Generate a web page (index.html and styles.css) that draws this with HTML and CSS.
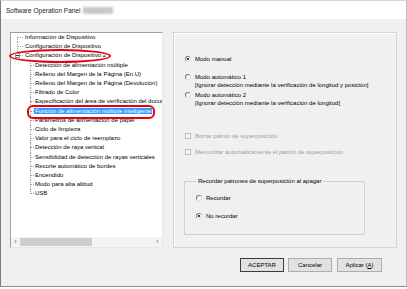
FILE: index.html
```html
<!DOCTYPE html>
<html lang="es">
<head>
    <meta charset="UTF-8">
    <title>Software Operation Panel</title>
    <link rel="stylesheet" href="styles.css">
</head>
<body>
<div class="window">
    <div class="titlebar">
        <span>Software Operation Panel</span>
        <span class="blur"></span>
    </div>

    <div class="main">
        <div class="panels">
            <div class="tree-wrap">
                <div class="tree">
                    <ul class="roots">
                        <li class="root first"><span class="label">Información de Dispositivo</span></li>
                        <li class="root"><span class="label">Configuración de Dispositivo</span></li>
                        <li class="root last">
                            <span class="toggle"></span>
                            <span class="label">Configuración de Dispositivo 2</span>
                            <ul class="kids">
                                <li class="kid"><span class="label">Detección de alimentación múltiple</span></li>
                                <li class="kid"><span class="label">Relleno del Margen de la Página (En U)</span></li>
                                <li class="kid"><span class="label">Relleno del Margen de la Página (Devolución)</span></li>
                                <li class="kid"><span class="label">Filtrado de Color</span></li>
                                <li class="kid"><span class="label">Especificación del área de verificación del documento</span></li>
                                <li class="kid"><span class="label selected">Función de alimentación múltiple inteligente</span></li>
                                <li class="kid"><span class="label">Parámetros de alimentación de papel</span></li>
                                <li class="kid"><span class="label">Ciclo de limpieza</span></li>
                                <li class="kid"><span class="label">Valor para el ciclo de reemplazo</span></li>
                                <li class="kid"><span class="label">Detección de raya vertical</span></li>
                                <li class="kid"><span class="label">Sensibilidad de detección de rayas verticales</span></li>
                                <li class="kid"><span class="label">Recorte automático de bordes</span></li>
                                <li class="kid"><span class="label">Encendido</span></li>
                                <li class="kid"><span class="label">Modo para alta altitud</span></li>
                                <li class="kid last"><span class="label">USB</span></li>
                            </ul>
                        </li>
                    </ul>
                    <div class="hscroll">
                        <span class="arrow">‹</span>
                        <span class="thumb"></span>
                        <span class="track"></span>
                        <span class="arrow">›</span>
                    </div>
                </div>
                <!-- red marks drawn on top of the screenshot -->
                <div class="mark mark-oval"></div>
                <div class="mark mark-box"></div>
            </div>

            <div class="panel">
                <div class="opt row-manual"><span class="radio on"></span>Modo manual</div>
                <div class="opt row-auto1"><span class="radio"></span>Modo automático 1</div>
                <div class="note">[Ignorar detección mediante la verificación de longitud y posición]</div>
                <div class="opt row-auto2"><span class="radio"></span>Modo automático 2</div>
                <div class="note">[Ignorar detección mediante la verificación de longitud]</div>

                <div class="opt off row-clear"><span class="check"></span>Borrar patrón de superposición</div>
                <div class="opt off row-memo"><span class="check"></span>Memorizar automáticamente el patrón de superposición</div>

                <fieldset class="group">
                    <legend>Recordar patrones de superposición al apagar</legend>
                    <div class="opt row-rec"><span class="radio"></span>Recordar</div>
                    <div class="opt row-norec"><span class="radio on"></span>No recordar</div>
                </fieldset>
            </div>
        </div>

        <div class="buttons">
            <button class="btn default">ACEPTAR</button>
            <button class="btn">Cancelar</button>
            <button class="btn wide">Aplicar (<u>A</u>)</button>
        </div>
    </div>
</div>
</body>
</html>
```

FILE: styles.css
```css
*{
    margin: 0;
    padding: 0;
    box-sizing: border-box;
}
body{
    background-color: #fff;
    font-family: "Liberation Sans", Arial, sans-serif;
    font-size: 6px;
    color: #000;
}
.window{
    width: 407px;
    height: 287px;
    background-color: #f0f0f0;
    border-top: 1px solid #cdd8e2;
    border-left: 1px solid #6f7f8f;
    border-right: 1px solid #b4c0cc;
    border-bottom: 1px solid #8c8c8c;
    display: flex;
    flex-direction: column;
}
.titlebar{
    height: 18px;
    background-color: #fff;
    display: flex;
    align-items: center;
    gap: 3px;
    padding-left: 5px;
    font-size: 6.5px;
    color: #222;
}
.blur{
    width: 30px;
    height: 7px;
    background-color: #c8c8c8;
    filter: blur(1.2px);
}
.main{
    padding: 13px 0 0 9px;
}
.panels{
    display: flex;
    gap: 10px;
}

/* tree */
.tree-wrap{
    position: relative;
    width: 153px;
    height: 216px;
}
.tree{
    height: 100%;
    background-color: #fff;
    border: 1px solid;
    border-color: #a0a0a0 #e8e8e8 #e8e8e8 #a0a0a0;
    display: flex;
    flex-direction: column;
    overflow: hidden;
}
.roots{
    flex: 1;
    list-style: none;
    line-height: 9.2px;
    white-space: nowrap;
}
.roots ul{
    list-style: none;
}
.root, .kid{
    position: relative;
}
.root{
    padding-left: 13px;
}
.kid{
    padding-left: 10px;
}
.root::before, .kid::before{
    content: "";
    position: absolute;
    left: 6px;
    top: 4px;
    width: 4px;
    border-top: 1px dotted #a0a0a0;
}
.root::before{
    width: 6px;
}
.root::after, .kid::after{
    content: "";
    position: absolute;
    left: 6px;
    top: 0;
    bottom: 0;
    border-left: 1px dotted #a0a0a0;
}
.root.first::after{
    top: 4px;
}
.root.last::after, .kid.last::after{
    bottom: auto;
    height: 5px;
}
.toggle{
    position: absolute;
    left: 4px;
    top: 2px;
    width: 5px;
    height: 5px;
    background-color: #fff;
    border: 1px solid #919191;
    z-index: 1;
}
.toggle::after{
    content: "";
    position: absolute;
    left: 0;
    top: 1px;
    width: 3px;
    border-top: 1px solid #333;
}
.label{
    padding: 0 1px;
}
.selected{
    background-color: #3399ff;
    color: #fff;
}
.hscroll{
    height: 10px;
    display: flex;
    align-items: center;
    background-color: #f4f4f4;
    color: #606060;
}
.arrow{
    width: 9px;
    text-align: center;
    font-size: 7px;
    line-height: 8px;
}
.thumb{
    width: 72px;
    height: 8px;
    background-color: #cdcdcd;
}
.track{
    flex: 1;
}
.mark{
    position: absolute;
    border: 2px solid #e60012;
}
.mark-oval{
    left: -1px;
    top: 17px;
    width: 102px;
    height: 14px;
    border-radius: 50%;
}
.mark-box{
    left: 17px;
    top: 73px;
    width: 128px;
    height: 14px;
    border-radius: 6px;
}

/* right panel */
.panel{
    width: 224px;
    height: 216px;
    border: 1px solid #d5d5d5;
    box-shadow: inset 1px 1px 0 #fff;
    padding-left: 11px;
}
.opt{
    display: flex;
    align-items: center;
    gap: 4px;
    height: 8px;
    line-height: 8px;
    white-space: nowrap;
}
.note{
    padding-left: 10px;
    height: 8px;
    line-height: 8px;
    white-space: nowrap;
}
.row-manual{ margin-top: 22px; }
.row-auto1{ margin-top: 10px; }
.row-auto2{ margin-top: 2px; }
.row-clear{ margin-top: 25px; }
.row-memo{ margin-top: 7.5px; }
.radio{
    position: relative;
    width: 6px;
    height: 6px;
    border-radius: 50%;
    background-color: #fff;
    border: 1px solid;
    border-color: #7d7d7d #dcdcdc #dcdcdc #7d7d7d;
}
.radio.on::after{
    content: "";
    position: absolute;
    left: 1px;
    top: 1px;
    width: 2px;
    height: 2px;
    border-radius: 50%;
    background-color: #000;
}
.check{
    width: 6px;
    height: 6px;
    background-color: #f4f4f4;
    border: 1px solid #bcbcbc;
}
.off{
    color: #9d9d9d;
}
.group{
    margin: 21.5px 0 0 -1px;
    width: 181px;
    height: 58px;
    border: 1px solid #d0d0d0;
    padding: 0 0 0 11px;
}
.group legend{
    margin-left: 0;
    padding: 0 2px;
    line-height: 8px;
}
.row-rec{ margin-top: 9px; }
.row-norec{ margin-top: 10px; }

/* buttons */
.buttons{
    display: flex;
    justify-content: flex-end;
    gap: 4px;
    margin-top: 10px;
    padding-right: 24px;
}
.btn{
    width: 44px;
    height: 14px;
    font-family: "Liberation Sans", Arial, sans-serif;
    font-size: 6px;
    background-color: #e1e1e1;
    border: 1px solid #adadad;
    color: #000;
}
.btn.default{
    border-color: #3c3c3c;
    box-shadow: inset 0 0 0 1px #e1e1e1;
}
.btn.wide{
    width: 45px;
    margin-left: 1px;
}
```
